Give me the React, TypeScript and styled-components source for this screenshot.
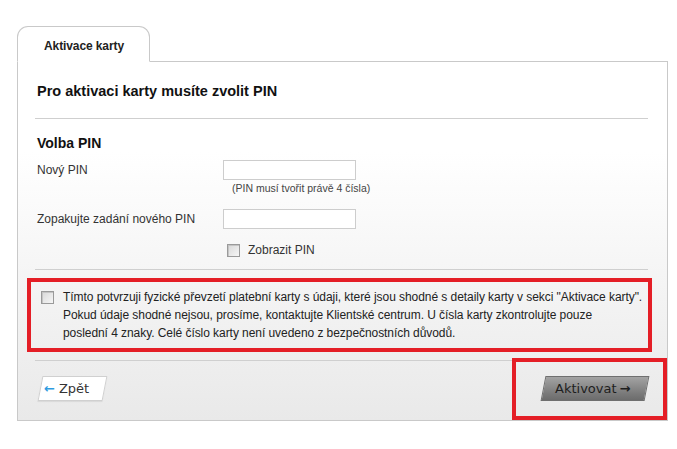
import styled, { createGlobalStyle } from "styled-components";

const GlobalStyle = createGlobalStyle`
  html, body {
    margin: 0;
    padding: 0;
    background: #ffffff;
    font-family: "Liberation Sans", Arial, sans-serif;
    color: #222;
  }
`;

const App = () => {
    return (
        <Page>
            <GlobalStyle />
            <Tab>Aktivace karty</Tab>
            <Panel>
                <Title>Pro aktivaci karty musíte zvolit PIN</Title>
                <Divider />
                <SectionTitle>Volba PIN</SectionTitle>
                <FormGrid>
                    <Label>Nový PIN</Label>
                    <Field>
                        <PinInput type="password" />
                        <Hint>(PIN musí tvořit právě 4 čísla)</Hint>
                    </Field>
                    <Label $gap>Zopakujte zadání nového PIN</Label>
                    <Field $gap>
                        <PinInput type="password" />
                    </Field>
                    <span />
                    <ShowPin>
                        <Check type="checkbox" />
                        <span>Zobrazit PIN</span>
                    </ShowPin>
                </FormGrid>
                <Divider $top={9} />
                <ConsentBox>
                    <Check type="checkbox" />
                    <ConsentText>
                        Tímto potvrzuji fyzické převzetí platební karty s údaji, které jsou shodné s detaily karty v sekci "Aktivace karty".<br />
                        Pokud údaje shodné nejsou, prosíme, kontaktujte Klientské centrum. U čísla karty zkontrolujte pouze<br />
                        poslední 4 znaky. Celé číslo karty není uvedeno z bezpečnostních důvodů.
                    </ConsentText>
                </ConsentBox>
                <Divider $top={8} />
                <Footer>
                    <BackButton type="button">
                        <span><BlueArrow>←</BlueArrow>Zpět</span>
                    </BackButton>
                    <Highlight>
                        <SubmitButton type="button">
                            <span>Aktivovat<b>→</b></span>
                        </SubmitButton>
                    </Highlight>
                </Footer>
            </Panel>
        </Page>
    );
};

const Page = styled.div`
  padding: 26px 0 0 17px;
  width: 651px;
`;

const Tab = styled.div`
  position: relative;
  z-index: 1;
  box-sizing: border-box;
  width: 133px;
  height: 36px;
  margin-bottom: -1px;
  padding: 11px 0 0 26px;
  border: 1px solid #c9c9c9;
  border-bottom: 1px solid #fff;
  border-radius: 11px 11px 0 0;
  background: #fff;
  font-size: 12px;
  line-height: 16px;
  font-weight: bold;
  letter-spacing: -0.1px;
  color: #222;
`;

const Panel = styled.div`
  box-sizing: border-box;
  width: 651px;
  padding: 0 19px 0 17px;
  border: 1px solid #c9c9c9;
  background: linear-gradient(to bottom, #ffffff 0px, #ffffff 90px, #f1f1f1 260px, #e9e9e9 100%);
`;

const Title = styled.h2`
  margin: 0;
  padding: 20px 0 0 2px;
  font-size: 14.5px;
  line-height: 18px;
  font-weight: bold;
  color: #111;
`;

const Divider = styled.div<{ $top?: number }>`
  height: 1px;
  margin-top: ${({ $top }) => ($top ?? 18)}px;
  background: #cfcfcf;
`;

const SectionTitle = styled.h3`
  margin: 16px 0 0;
  padding-left: 2px;
  font-size: 14px;
  line-height: 16px;
  font-weight: bold;
  color: #111;
`;

const FormGrid = styled.div`
  display: grid;
  grid-template-columns: 188px 1fr;
  margin-top: 9px;
`;

const Label = styled.div<{ $gap?: boolean }>`
  padding-left: 2px;
  margin-top: ${({ $gap }) => ($gap ? 15 : 0)}px;
  font-size: 12px;
  line-height: 20px;
  color: #333;
`;

const Field = styled.div<{ $gap?: boolean }>`
  display: flex;
  flex-direction: column;
  margin-top: ${({ $gap }) => ($gap ? 15 : 0)}px;
`;

const PinInput = styled.input`
  box-sizing: border-box;
  width: 133px;
  height: 20px;
  margin: 0;
  border: 1px solid #cdcdcd;
  background: #fff;
  outline: none;
`;

const Hint = styled.span`
  margin: 2px 0 0 9px;
  font-size: 10.5px;
  line-height: 12px;
  color: #444;
`;

const ShowPin = styled.label`
  display: flex;
  align-items: center;
  gap: 8px;
  height: 20px;
  margin-top: 11px;
  padding-left: 4px;
  font-size: 12px;
  color: #333;
`;

const Check = styled.input`
  appearance: none;
  box-sizing: border-box;
  flex: none;
  width: 13px;
  height: 13px;
  margin: 0;
  border: 1px solid #9a9a9a;
  background: linear-gradient(135deg, #d8d8d8, #f6f6f6);
  box-shadow: inset 1px 1px 0 #c4c4c4;
`;

const ConsentBox = styled.div`
  display: flex;
  align-items: flex-start;
  gap: 9px;
  margin: 8px -4px 0 -8px;
  padding: 6px 3px 6px 10px;
  border: 4px solid #e41e26;

  ${Check} {
    margin-top: 3px;
  }
`;

const ConsentText = styled.p`
  margin: 0;
  font-size: 12px;
  line-height: 18px;
  letter-spacing: -0.06px;
  white-space: nowrap;
  color: #222;
`;

const Footer = styled.div`
  display: flex;
  justify-content: space-between;
  align-items: flex-start;
`;

const SkewButton = styled.button`
  position: relative;
  height: 25px;
  margin: 0;
  padding: 0;
  border: none;
  background: none;
  font-family: "DejaVu Sans", Verdana, sans-serif;
  font-size: 13px;
  cursor: pointer;

  &::before {
    content: "";
    position: absolute;
    inset: 0;
    transform: skewX(-11deg);
  }

  span {
    position: relative;
    display: flex;
    align-items: center;
    height: 100%;
  }
`;

const BackButton = styled(SkewButton)`
  width: 65px;
  margin: 15px 0 0 5px;
  color: #333;

  &::before {
    border: 1px solid #d0d0d0;
    background: #fff;
    box-shadow: 0 1px 1px rgba(0, 0, 0, 0.08);
  }

  span {
    padding-left: 4px;
    gap: 4px;
  }
`;

const BlueArrow = styled.i`
  font-style: normal;
  color: #2e9be0;
  font-weight: bold;
`;

const Highlight = styled.div`
  margin: -3px -19px 0 0;
  padding: 14px 16px 15px 27px;
  border: 4px solid #e41e26;
`;

const SubmitButton = styled(SkewButton)`
  width: 104px;
  color: #1e1e1e;

  &::before {
    border: 1px solid #6f6f6f;
    background: linear-gradient(to bottom, #a3a3a3, #7b7b7b 70%, #6c6c6c);
  }

  span {
    padding-left: 12px;
    gap: 3px;
  }

  b {
    font-size: 13px;
  }
`;

export default App;
